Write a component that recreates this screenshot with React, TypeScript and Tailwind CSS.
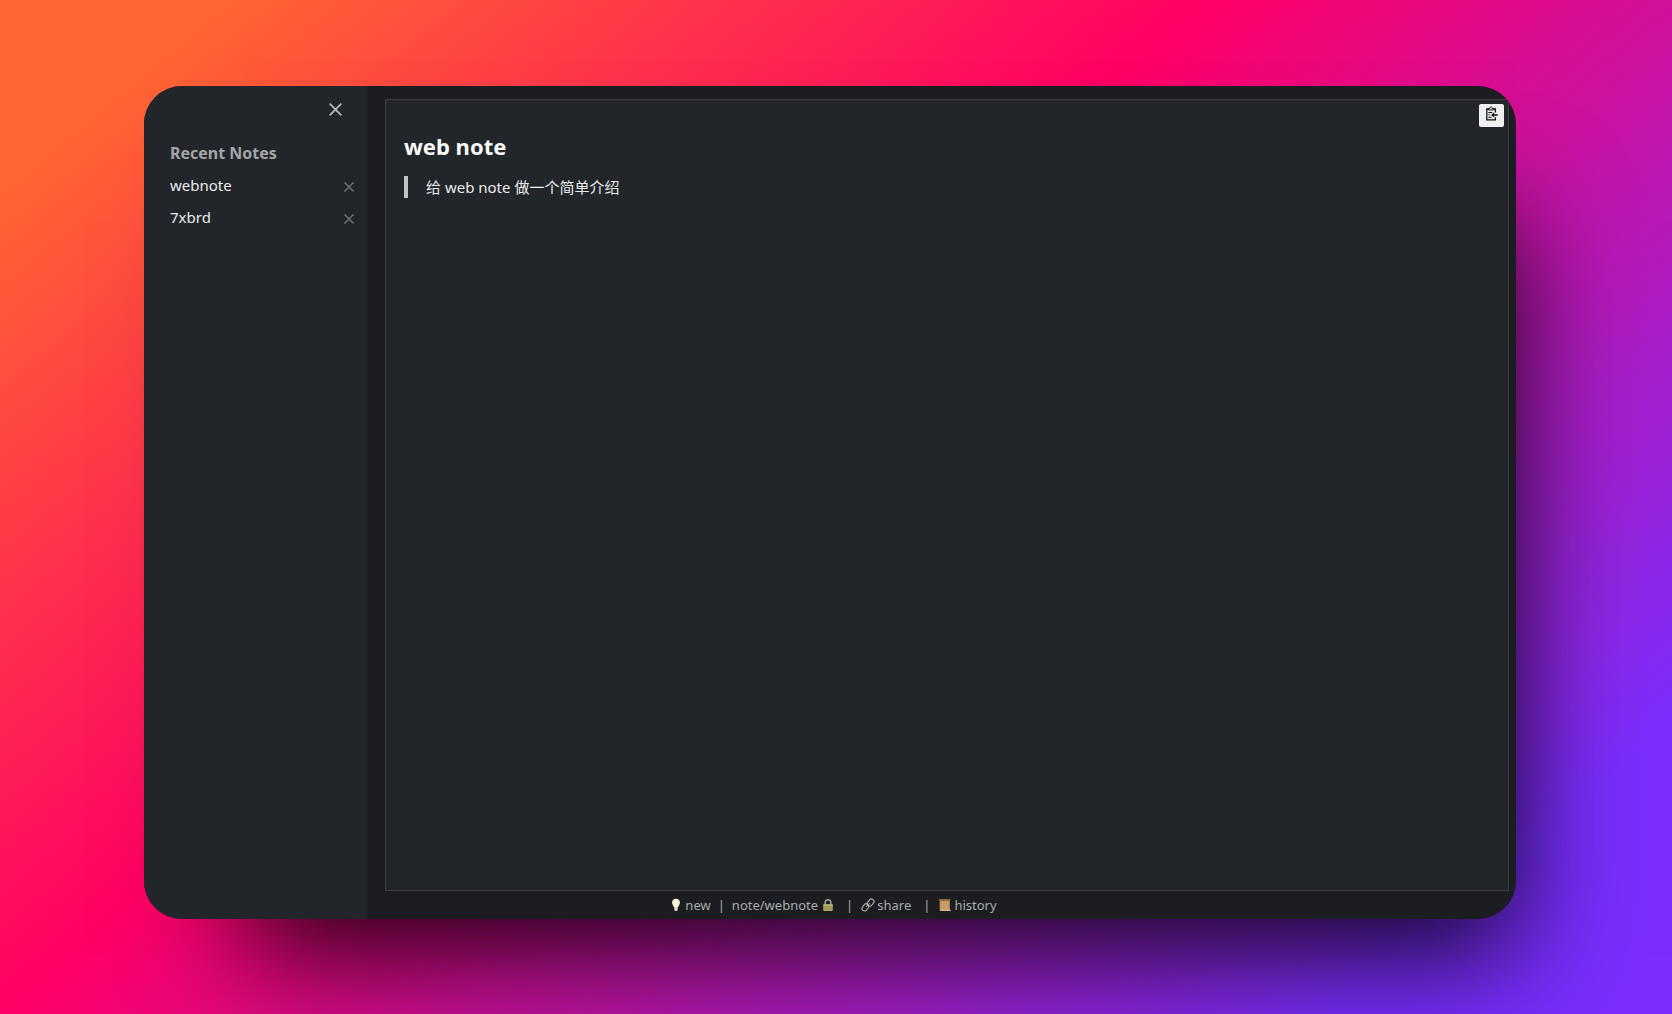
import React from "react";

const notes = ["webnote", "7xbrd"];

function Cross({ className, width }: { className: string; width: number }) {
  return (
    <svg viewBox="0 0 12 12" className={className} fill="none" stroke="currentColor" strokeWidth={width} aria-hidden="true">
      <path d="M0.6 0.6 11.4 11.4M11.4 0.6 0.6 11.4" />
    </svg>
  );
}

function Bulb() {
  return (
    <svg viewBox="0 0 10 14" className="h-3.5 w-2.5" aria-hidden="true">
      <path d="M5 0.8C2.600 0.800 1 2.400 1 4.500c0 1.900 1.400 3.200 2 5h4C7.600 7.700 9 6.400 9 4.500 9 2.400 7.400 0.800 5 0.800Z" fill="#f5ecc0" />
      <path d="M3.600 2.600c.9-.7 2-.7 2.800 0L6.100 10H3.900Z" fill="#fffdf0" />
      <path d="M3.200 9.400h3.600v2.400L5.900 13H4.100l-.9-1.200Z" fill="#d8d3c2" />
    </svg>
  );
}

function Lock() {
  return (
    <svg viewBox="0 0 12 14" className="h-3.5 w-3" aria-hidden="true">
      <path d="M3.200 7V4.600a2.800 2.800 0 0 1 5.600 0V7" fill="none" stroke="#a3a5a3" strokeWidth="1.500" />
      <rect x="1.200" y="6.200" width="9.600" height="6.800" rx="0.900" fill="#aaa560" />
      <path d="M1.200 8.600h9.600M1.200 10.800h9.600" stroke="#8b8746" strokeWidth="0.700" />
      <path d="M1.200 7.100h9.600" stroke="#cfca8a" strokeWidth="0.800" />
    </svg>
  );
}

function Chain() {
  return (
    <svg viewBox="0 0 14 14" className="size-3.5" fill="none" stroke="#a9abad" strokeWidth="1.200" aria-hidden="true">
      <rect x="5.700" y="2.100" width="7.800" height="5" rx="2.500" transform="rotate(-50 9.600 4.600)" />
      <rect x="0.500" y="6.900" width="7.800" height="5" rx="2.500" transform="rotate(-50 4.400 9.400)" />
      <path d="M5.300 8.700 8.700 5.300" />
    </svg>
  );
}

function Scroll() {
  return (
    <svg viewBox="0 0 14 14" className="size-3.5" aria-hidden="true">
      <path d="M1 1.200h11.400l-.6 1.800v8.200l1 1.800H2.400l-.7-1.600V3Z" fill="#c29662" />
      <path d="M1 1.200h11.400l-.6 1.600H1.700Z" fill="#8a6238" />
      <path d="M3.400 4.600h6.800M3.400 6.400h6.800M3.400 8.200h6.800M3.400 10h6.800" stroke="#d0a673" strokeWidth="0.800" />
      <path d="M2 11.400h9.800l1 1.600H2.600Z" fill="#dbb484" />
    </svg>
  );
}

function ClipboardImport() {
  return (
    <svg viewBox="0 0 14 16" className="h-4 w-3.5" fill="none" stroke="#111" strokeWidth="1.300" aria-hidden="true">
      <path d="M10.400 6.500V3H1.800v10.800h8.600v-2.600" />
      <path d="M3.800 4V2.400H5C5.100 1.300 5.500.9 6.100.9s1 .4 1.100 1.500h1.200V4Z" fill="#eee" strokeWidth="1" />
      <path d="M3.400 6.500h4M3.400 8.900h1.600M3.400 11.300h3.200" strokeWidth="1" />
      <path d="M12.800 8.900H8" strokeWidth="1.500" />
      <path d="M9.200 6.400v5L6 8.900Z" fill="#111" stroke="none" />
    </svg>
  );
}

export default function App() {
  return (
    <div className="flex min-h-screen bg-[linear-gradient(140deg,#ff6432_8%,#ff0065_42%,#7b2eff_88%)] pt-[86px] pr-[156px] pb-[95px] pl-36 font-['Noto_Sans','Noto_Sans_CJK_SC',sans-serif]">
      <div className="flex flex-1 overflow-hidden rounded-[38px] bg-[#1b1d20] shadow-[50px_86px_108px_-50px_rgba(0,0,0,0.85)]">
        <aside className="flex w-[223px] shrink-0 flex-col bg-[#22262a]">
          <div className="flex justify-end pt-[17px] pr-[25px]">
            <button type="button" aria-label="Close sidebar" className="text-[#b9bcbe]">
              <Cross className="size-[13px]" width={1.6} />
            </button>
          </div>
          <h2 className="mt-[25px] pl-[26px] text-base leading-6 font-bold text-[#a3a5a7]">Recent Notes</h2>
          <ul className="mt-1">
            {notes.map((note) => (
              <li key={note} className="flex h-8 items-center justify-between pr-[13px] pl-[26px]">
                <a href={`#${note}`} className="text-[15px] leading-6 text-[#e9ebec]">{note}</a>
                <button type="button" aria-label={`Remove ${note}`} className="pt-1 text-[#777a7d]">
                  <Cross className="size-2.5" width={1.4} />
                </button>
              </li>
            ))}
          </ul>
        </aside>
        <div className="flex min-w-0 flex-1 flex-col pt-[13px] pr-[7px] pl-[18px]">
          <main className="relative flex-1 border border-[#3d3f42] bg-[#22252a] px-[18px] pt-[30px]">
            <h1 className="text-[22px] leading-8 font-bold text-[#fafafa]">web note</h1>
            <blockquote className="mt-3.5 border-l-4 border-[#c2c4c6] pl-[18px] text-[15px] leading-[22px] text-[#e9ebec]">
              给 web note 做一个简单介绍
            </blockquote>
            <button type="button" aria-label="Copy note" className="absolute top-1 right-1 flex h-[23px] w-[25px] items-start justify-center rounded-xs bg-[#eeefef] pt-0.5">
              <ClipboardImport />
            </button>
          </main>
          <footer className="flex h-7 items-center justify-center pr-[226px] text-[13px] leading-5 text-[#a9abad]">
            <button type="button" className="flex items-center gap-1">
              <Bulb />
              new
            </button>
            <span className="px-[7px]">|</span>
            <button type="button" className="flex items-center gap-1">
              note/webnote
              <Lock />
            </button>
            <span className="pr-2 pl-3">|</span>
            <button type="button" className="flex items-center gap-0.5">
              <Chain />
              share
            </button>
            <span className="pr-2 pl-3">|</span>
            <button type="button" className="flex items-center gap-0.5">
              <Scroll />
              history
            </button>
          </footer>
        </div>
      </div>
    </div>
  );
}
